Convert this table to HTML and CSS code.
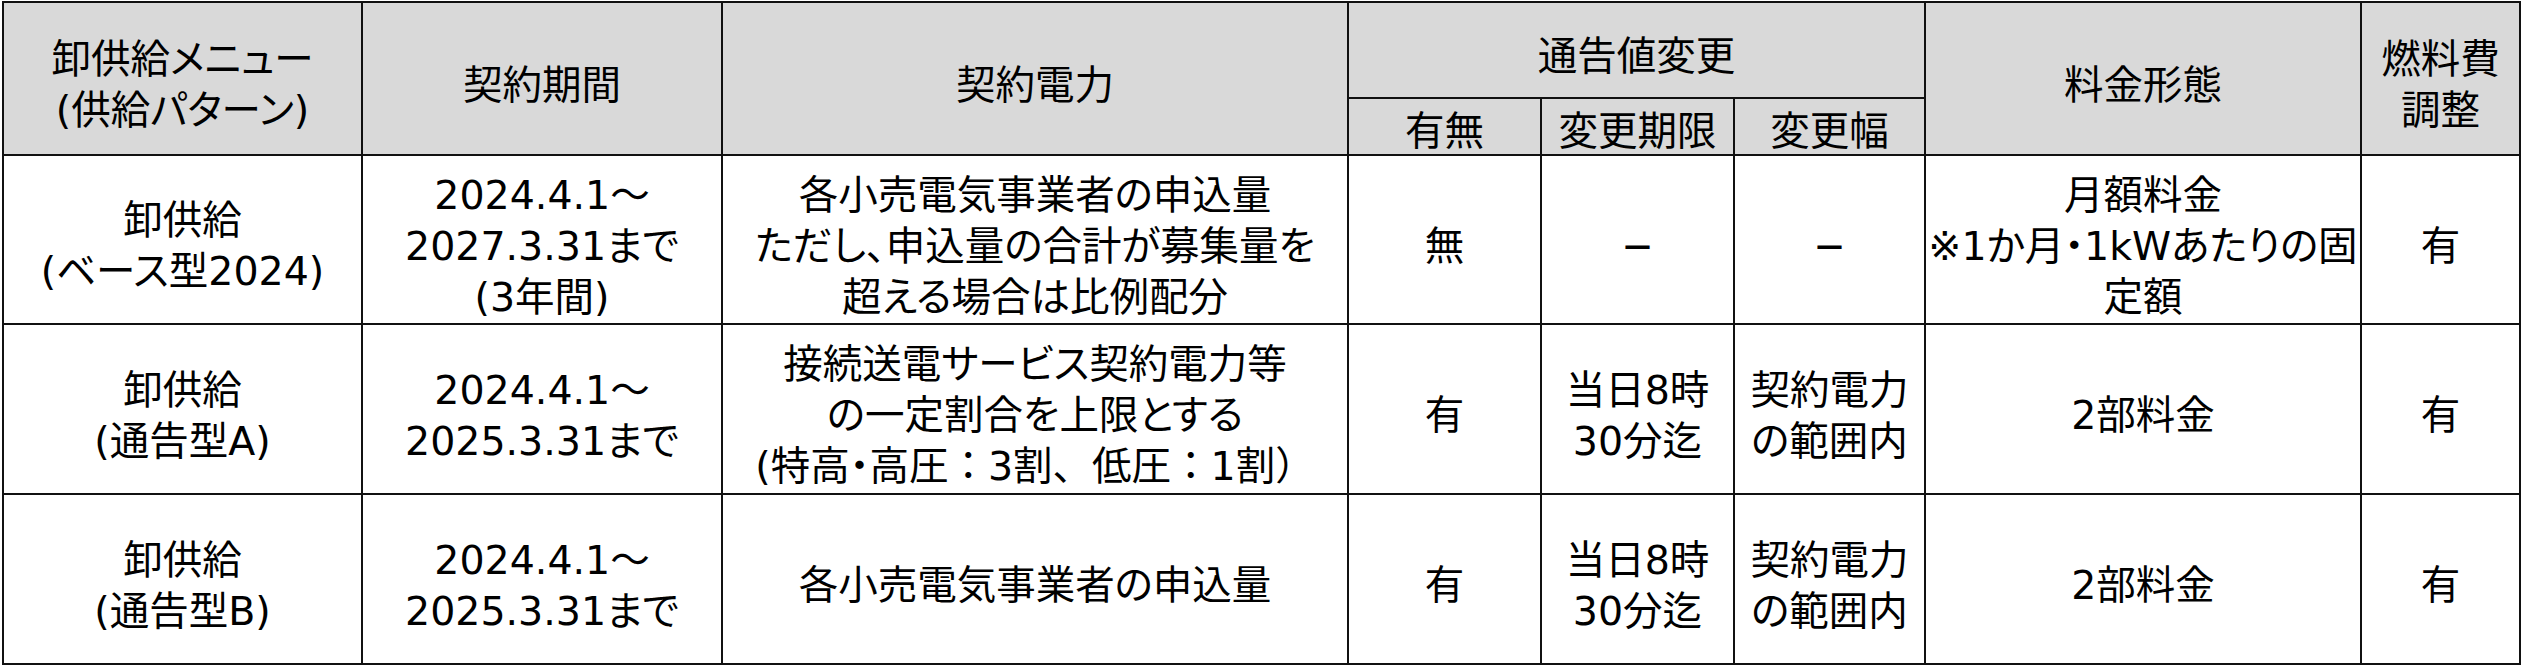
FILE: index.html
```html
<!DOCTYPE html>
<html lang="ja">
<head>
<meta charset="utf-8">
<title>卸供給メニュー</title>
<link rel="stylesheet" href="styles.css">
</head>
<body>
<table class="menu">
  <colgroup>
    <col class="c-menu">
    <col class="c-period">
    <col class="c-power">
    <col class="c-yn">
    <col class="c-limit">
    <col class="c-range">
    <col class="c-fee">
    <col class="c-fuel">
  </colgroup>
  <thead>
    <tr class="head-top">
      <th rowspan="2">卸供給メニュー<br>(供給パターン)</th>
      <th rowspan="2">契約期間</th>
      <th rowspan="2">契約電力</th>
      <th colspan="3">通告値変更</th>
      <th rowspan="2">料金形態</th>
      <th rowspan="2">燃料費<br>調整</th>
    </tr>
    <tr class="head-sub">
      <th>有無</th>
      <th>変更期限</th>
      <th>変更幅</th>
    </tr>
  </thead>
  <tbody>
    <tr class="row-a">
      <td>卸供給<br>(ベース型2024)</td>
      <td>2024.4.1～<br>2027.3.31まで<br>(3年間)</td>
      <td>各小売電気事業者の申込量<br>ただし、申込量の合計が募集量を<br>超える場合は比例配分</td>
      <td>無</td>
      <td><span class="dash">－</span></td>
      <td><span class="dash">－</span></td>
      <td>月額料金<br>※1か月・1kWあたりの固<br>定額</td>
      <td>有</td>
    </tr>
    <tr class="row-b">
      <td>卸供給<br>(通告型A)</td>
      <td>2024.4.1～<br>2025.3.31まで</td>
      <td>接続送電サービス契約電力等<br>の一定割合を上限とする<br>(特高・高圧<span class="fw">：</span>3割<span class="fw">、</span>低圧<span class="fw">：</span>1割<span class="fw">）</span></td>
      <td>有</td>
      <td>当日8時<br>30分迄</td>
      <td>契約電力<br>の範囲内</td>
      <td>2部料金</td>
      <td>有</td>
    </tr>
    <tr class="row-b">
      <td>卸供給<br>(通告型B)</td>
      <td>2024.4.1～<br>2025.3.31まで</td>
      <td>各小売電気事業者の申込量</td>
      <td>有</td>
      <td>当日8時<br>30分迄</td>
      <td>契約電力<br>の範囲内</td>
      <td>2部料金</td>
      <td>有</td>
    </tr>
  </tbody>
</table>
</body>
</html>
```

FILE: styles.css
```css
html, body {
  margin: 0;
  padding: 0;
  background: #ffffff;
}

body {
  padding: 1px 0 0 2px;
  font-family: "DejaVu Sans", "Noto Sans CJK JP", sans-serif;
  color: #000000;
}

.menu {
  border-collapse: collapse;
  table-layout: fixed;
  width: 2518px;
  font-size: 39.5px;
  line-height: 51px;
  font-feature-settings: "palt";
}

.c-menu { width: 359px; }
.c-period { width: 360px; }
.c-power { width: 626px; }
.c-yn { width: 193px; }
.c-limit { width: 193px; }
.c-range { width: 191px; }
.c-fee { width: 436px; }
.c-fuel { width: 159px; }

.menu th,
.menu td {
  border: 2px solid #111111;
  padding: 13px 0 0;
  text-align: center;
  vertical-align: middle;
  white-space: nowrap;
  overflow: visible;
  font-weight: 400;
}

.menu th {
  background: #d9d9d9;
}

.head-top { height: 96px; }
.head-sub { height: 57px; }
.head-sub th {
  line-height: 44px;
  padding-top: 9px;
}

.row-a { height: 169px; }
.row-b { height: 170px; }

.fw {
  font-feature-settings: normal;
}

.dash {
  font-family: "Noto Sans CJK JP", sans-serif;
  font-size: 34px;
  font-weight: 700;
}
```
